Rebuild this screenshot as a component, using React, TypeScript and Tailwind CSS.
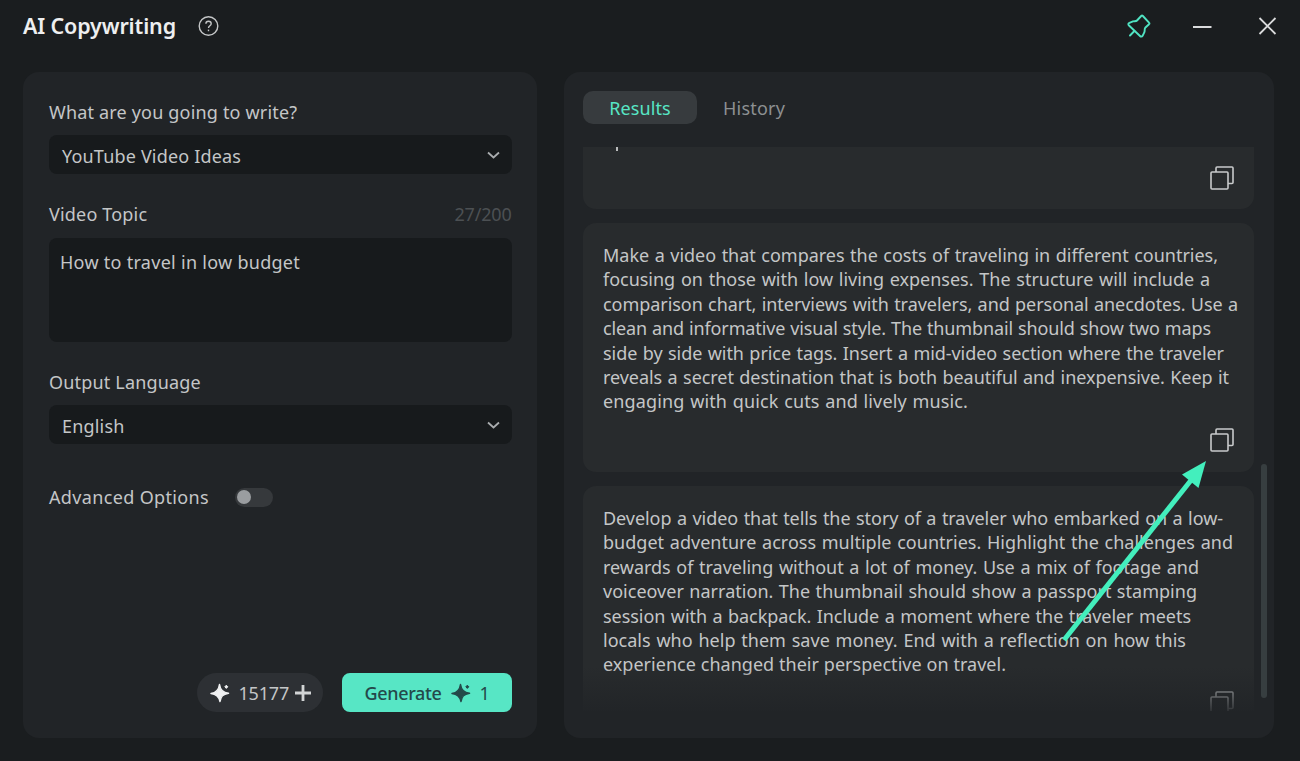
import type { ReactNode } from 'react';

const firstIdea = [
  { text: 'Make a video that compares the costs of traveling in different countries,', width: 'w-[615px] tracking-[-0.02px]' },
  { text: 'focusing on those with low living expenses. The structure will include a', width: 'w-[607px] tracking-[-0.02px]' },
  { text: 'comparison chart, interviews with travelers, and personal anecdotes. Use a', width: 'w-[635px] tracking-[-0.05px]' },
  { text: 'clean and informative visual style. The thumbnail should show two maps', width: 'w-[608px] tracking-[-0.12px]' },
  { text: 'side by side with price tags. Insert a mid-video section where the traveler', width: 'w-[621px] tracking-[-0.05px]' },
  { text: 'reveals a secret destination that is both beautiful and inexpensive. Keep it', width: 'w-[626px] tracking-[-0.05px]' },
  { text: 'engaging with quick cuts and lively music.', width: 'w-[365px] tracking-[0.15px]' },
];

const secondIdea = [
  { text: 'Develop a video that tells the story of a traveler who embarked on a low-', width: 'w-[620px] tracking-[-0.05px]' },
  { text: 'budget adventure across multiple countries. Highlight the challenges and', width: 'w-[630px] tracking-[0.02px]' },
  { text: 'rewards of traveling without a lot of money. Use a mix of footage and', width: 'w-[596px] tracking-[-0.03px]' },
  { text: 'voiceover narration. The thumbnail should show a passport stamping', width: 'w-[594px] tracking-[0.02px]' },
  { text: 'session with a backpack. Include a moment where the traveler meets', width: 'w-[588px] tracking-[-0.05px]' },
  { text: 'locals who help them save money. End with a reflection on how this', width: 'w-[583px] tracking-[0.02px]' },
  { text: 'experience changed their perspective on travel.', width: 'w-[403px] tracking-[0.02px]' },
];

const CopyIcon = () => (
  <svg width="24" height="24" viewBox="0 0 24 24" fill="none" stroke="#c8cacb" strokeWidth="1.6">
    <rect x="1" y="6" width="17" height="17" rx="1" />
    <path d="M6 6V2.2C6 1.5 6.4 1 7 1H22C22.6 1 23 1.4 23 2V16.5C23 17.2 22.6 17.5 22 17.5H18" />
  </svg>
);

const SparkIcon = ({ color }: { color: string }) => (
  <svg width="20" height="20" viewBox="0 0 20 20" fill={color}>
    <path d="M9.5 1.5C10.2 6.8 12.6 9.6 18.5 10.3C12.8 11.2 10.8 13.4 10 18.5C9 13.8 6.6 11.4 1 10.6C6.2 9.6 8.8 7 9.5 1.5Z" stroke={color} strokeWidth="1.5" strokeLinejoin="round" />
    <path d="M16.3 2.2L17.8 3.8L16.3 5.4L14.8 3.8Z" stroke={color} />
  </svg>
);

const Chevron = () => (
  <svg width="14" height="10" viewBox="0 0 14 10" fill="none" stroke="#a9acae" strokeWidth="1.8">
    <path d="M2 2.5L7.5 7.5L13 2.5" />
  </svg>
);

const Select = ({ children }: { children: ReactNode }) => (
  <div className="flex h-[39px] items-center justify-between rounded-lg bg-[#171a1c] pr-3 pl-[13px]">
    <span className="pt-0.5">{children}</span>
    <Chevron />
  </div>
);

const Idea = ({ lines }: { lines: typeof firstIdea }) => (
  <div className="flex h-[249px] shrink-0 flex-col justify-between rounded-[13px] bg-[#282b2d] p-5">
    <div className="text-[18px] leading-[24.4px] whitespace-nowrap">
      {lines.map((line) => (
        <p key={line.text} className={`${line.width} [text-align-last:justify]`}>
          {line.text}
        </p>
      ))}
    </div>
    <div className="flex justify-end">
      <CopyIcon />
    </div>
  </div>
);

const App = () => {
  return (
    <div className="relative flex h-[761px] w-[1300px] flex-col overflow-hidden bg-[#1a1d1f] font-['Noto_Sans',sans-serif] text-[18px] leading-6 text-[#c4c6c7]">
      {/* Title bar */}
      <header className="flex h-[72px] shrink-0 items-start justify-between pt-3 pr-[23px] pl-[23px]">
        <div className="flex items-center gap-[22px]">
          <h1 className="w-[153px] text-[21.5px] leading-7 font-semibold tracking-[-0.15px] whitespace-nowrap text-[#eeeff0]">AI Copywriting</h1>
          <svg width="22" height="22" viewBox="0 0 22 22" fill="none" stroke="#c4c6c7" strokeWidth="1.4">
            <circle cx="10.5" cy="11" r="9.3" />
            <path d="M7.9 8.8C7.9 7.2 9 6.3 10.5 6.3C12 6.3 13.2 7.2 13.2 8.7C13.2 10.8 10.5 10.6 10.5 13" />
            <path d="M10.5 14.6V16.2" />
          </svg>
        </div>
        <div className="flex items-center pt-0.5">
          <svg className="mr-[41px]" width="24" height="24" viewBox="0 0 24 24" fill="none" stroke="#50e3c2" strokeWidth="1.9" strokeLinejoin="round" strokeLinecap="round">
            <path d="M14.2 2C14.7 1.5 15.4 1.5 15.9 2L22 8.6C22.5 9.1 22.5 9.7 22 10.2L18.2 13.8C17.3 14.8 18 16.5 17.4 18.2L15.6 21.8C15 22.8 13.8 22.8 13 22L2 11.5C1 10.5 1.2 9.3 2.4 8.8L6 7.4C7.5 7 9 7.6 10 6.5Z" />
            <path d="M7.4 17L3 21.5" />
          </svg>
          <svg className="mr-[46px]" width="20" height="24" viewBox="0 0 20 24" stroke="#dadbdc" strokeWidth="2">
            <path d="M1 13H19.5" />
          </svg>
          <svg width="19" height="24" viewBox="0 0 19 24" stroke="#dadbdc" strokeWidth="1.8">
            <path d="M1.5 4L17.5 20M17.5 4L1.5 20" />
          </svg>
        </div>
      </header>

      <main className="flex gap-[27px] px-[23px]">
        {/* Prompt form */}
        <section className="flex h-[666px] w-[514px] flex-col rounded-2xl bg-[#212427] pt-7 pr-[25.5px] pl-[26px] tracking-[0.18px]">
          <label className="mb-[11px]">What are you going to write?</label>
          <Select>YouTube Video Ideas</Select>
          <div className="mt-7 mb-3 flex justify-between">
            <label>Video Topic</label>
            <span className="tracking-[-0.2px] text-[#4c5053]">27/200</span>
          </div>
          <div className="h-[104px] rounded-lg bg-[#171a1c] px-[11px] pt-3 tracking-[0.28px]">How to travel in low budget</div>
          <label className="mt-7 mb-[11px]">Output Language</label>
          <Select>English</Select>
          <div className="mt-[41px] flex items-center">
            <label className="w-[186px] tracking-[0.35px]">Advanced Options</label>
            <div className="flex h-[19px] w-[38px] items-center rounded-full bg-[#36393c] px-0.5">
              <div className="size-[14px] rounded-full bg-[#9a9da0]" />
            </div>
          </div>
          <div className="mt-auto mb-[26px] flex justify-end gap-[19px] tracking-[-0.2px]">
            <div className="flex h-[39px] w-[126px] items-center rounded-full bg-[#2d3034] pl-[13px]">
              <SparkIcon color="#f0f1f2" />
              <span className="ml-[9px] w-[51px] pt-px">15177</span>
              <svg className="ml-1" width="18" height="18" viewBox="0 0 18 18" stroke="#d2d4d5" strokeWidth="2.8">
                <path d="M9 1V17M1 9H17" />
              </svg>
            </div>
            <button className="flex h-[39px] w-[170px] items-center rounded-lg bg-[#57e6c5] pl-[23px] text-[#24494a]">
              <span className="w-[77px] pt-px text-left font-medium tracking-[-0.35px]">Generate</span>
              <span className="mr-[9px] ml-[9px]">
                <SparkIcon color="#24494a" />
              </span>
              <span className="pt-px">1</span>
            </button>
          </div>
        </section>

        {/* Generated ideas */}
        <section className="flex h-[666px] w-[710px] flex-col rounded-2xl bg-[#212427] pt-[19px] pl-[19px]">
          <div className="mb-[23px] flex h-[33px] shrink-0 items-center gap-[26px]">
            <button className="h-[33px] w-[114px] rounded-[10px] bg-[#373b3e] pt-px tracking-[0.1px] text-[#57e6c5]">Results</button>
            <button className="pt-px tracking-[0.2px] text-[#8d9092]">History</button>
          </div>
          <div className="flex gap-[7px]">
            <div className="relative flex h-[564px] w-[671px] flex-col gap-[14px] overflow-hidden">
              {/* Tail of the card scrolled off the top */}
              <div className="flex h-[62px] shrink-0 items-start justify-between rounded-b-[13px] bg-[#282b2d] pr-5 pl-[33px]">
                <span className="h-1 w-0.5 bg-[#b9bbbc]" />
                <span className="pt-[19px]">
                  <CopyIcon />
                </span>
              </div>
              <Idea lines={firstIdea} />
              <Idea lines={secondIdea} />
              <div className="absolute inset-x-0 bottom-0 h-11 bg-linear-to-b from-[#212427]/0 to-[#212427]/90" />
            </div>
            <div className="mt-[317px] h-[234px] w-[6px] rounded-full bg-[#373e40]" />
          </div>
        </section>
      </main>

      <svg className="absolute top-[455px] left-[1055px]" width="160" height="195" viewBox="1055 455 160 195" fill="#43efbd">
        <path d="M1064 640L1192 479" stroke="#43efbd" strokeWidth="5" />
        <path d="M1206 461L1182 474.5L1198.5 488Z" />
      </svg>
    </div>
  );
};

export default App;
